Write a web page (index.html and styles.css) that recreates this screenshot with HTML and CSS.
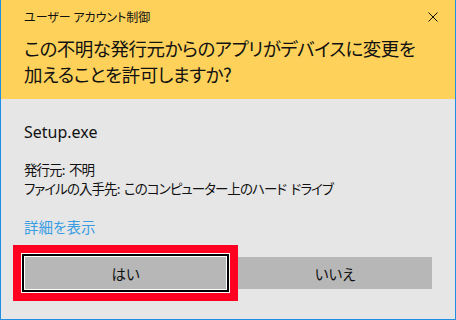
FILE: index.html
```html
<!DOCTYPE html>
<html lang="ja">
<head>
<meta charset="utf-8">
<link rel="stylesheet" href="styles.css">
</head>
<body>
<div class="window">
  <div class="banner">
    <div class="titlebar">
      <span class="title">ユーザー アカウント制御</span>
      <svg class="close" width="10" height="10" viewBox="0 0 10 10"><path d="M0.5 0.5 L9.5 9.5 M9.5 0.5 L0.5 9.5" stroke="#111" stroke-width="1"/></svg>
    </div>
    <div class="question">この不明な発行元からのアプリがデバイスに変更を<br>加えることを許可しますか?</div>
  </div>
  <div class="content">
    <div class="app">Setup.exe</div>
    <div class="info">
      <div>発行元: 不明</div>
      <div>ファイルの入手先: このコンピューター上のハード ドライブ</div>
    </div>
    <div class="details">詳細を表示</div>
    <div class="buttons">
      <div class="highlight"><div class="focus"><button class="btn yes">はい</button></div></div>
      <button class="btn no">いいえ</button>
    </div>
  </div>
</div>
</body>
</html>
```
FILE: styles.css
```css
html, body {
  margin: 0;
  padding: 0;
  width: 456px;
  height: 320px;
  overflow: hidden;
  background: #e6e6e6;
}
.window {
  width: 454px;
  height: 319px;
  border-left: 1px solid #1c8fe3;
  border-right: 1px solid #1c8fe3;
  border-bottom: 1px solid #1c8fe3;
  background: #e6e6e6;
  font-family: "Noto Sans CJK JP", sans-serif;
  font-feature-settings: "palt";
  color: #111;
}
.banner {
  height: 99px;
  background: #fed25a;
  padding: 0 17px 0 23px;
  box-sizing: border-box;
}
.titlebar {
  display: flex;
  justify-content: space-between;
  align-items: center;
  padding-top: 8px;
  height: 18px;
}
.title {
  font-size: 12px;
  line-height: 18px;
}
.close {
  display: block;
}
.question {
  margin-top: 9px;
  font-size: 18.5px;
  line-height: 26px;
  letter-spacing: -0.5px;
  white-space: nowrap;
}
.content {
  padding: 0 0 0 23px;
}
.app {
  font-family: "Noto Sans", "Noto Sans CJK JP", sans-serif;
  font-size: 16px;
  line-height: 20px;
  padding-top: 23px;
}
.info {
  margin-top: 18px;
  font-size: 13.5px;
  line-height: 19px;
  letter-spacing: -0.95px;
  word-spacing: 2.5px;
  white-space: nowrap;
}
.details {
  margin-top: 19px;
  font-size: 14.5px;
  line-height: 19px;
  color: #3a9de2;
}
.buttons {
  display: flex;
  align-items: center;
  margin-top: 9px;
  margin-left: -11px;
}
.highlight {
  border: 8px solid #ff0021;
}
.focus {
  border: 1px solid #fff;
}
.btn {
  display: block;
  border: 0;
  margin: 0;
  padding: 0;
  background: #b7b7b7;
  font-family: "Noto Sans CJK JP", sans-serif;
  font-feature-settings: "palt";
  font-size: 14.5px;
  color: #111;
  height: 32px;
}
.yes {
  width: 207px;
  height: 38px;
  border: 2px solid #000;
  box-shadow: inset 0 0 0 1px #fff;
}
.no {
  width: 194px;
}
```
